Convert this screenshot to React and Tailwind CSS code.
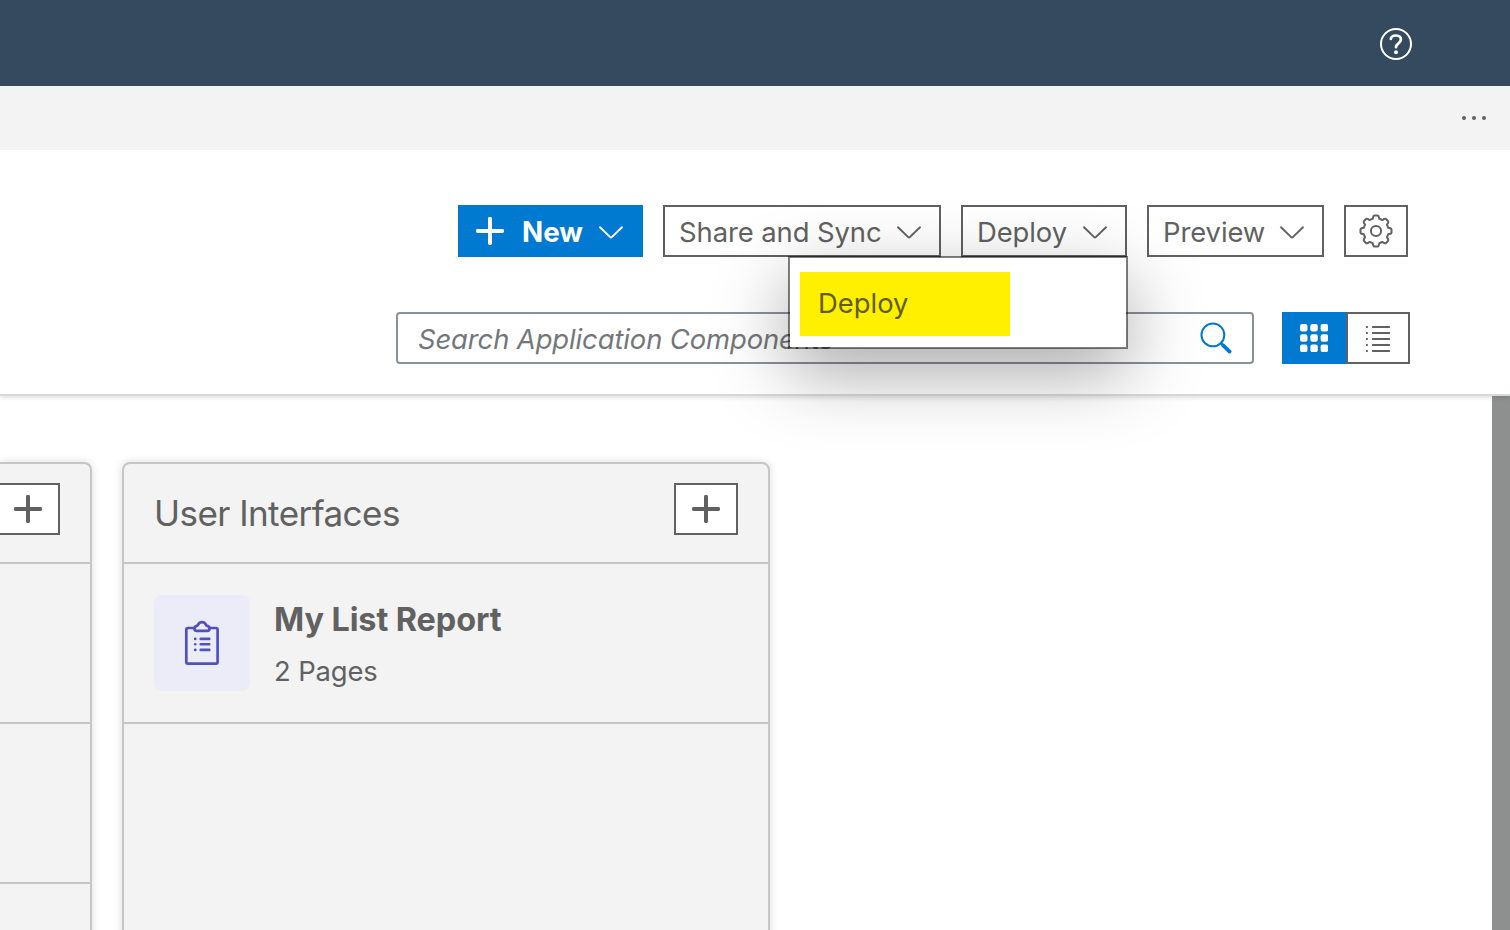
import React from 'react';

function Chevron() {
  return (
    <svg width="26" height="14" viewBox="0 0 26 14" fill="none" stroke="currentColor" strokeWidth="1.9" strokeLinecap="round" strokeLinejoin="round" className="mt-[3px] shrink-0">
      <path d="M2 1.3 L12.2 11.1 Q13 11.9 13.8 11.1 L24 1.3" />
    </svg>
  );
}

function Plus() {
  return (
    <svg width="28" height="28" viewBox="0 0 28 28" fill="currentColor" className="shrink-0">
      <rect x="12" width="4" height="28" rx="1.4" />
      <rect y="12" width="28" height="4" rx="1.4" />
    </svg>
  );
}

function Gear() {
  const steps = [];
  for (let i = 0; i < 8; i++) {
    const a = (i * Math.PI) / 4 - Math.PI / 2;
    // r: distance out from the centre, t: offset across the tooth
    const p = (r, t) => `${(17 + r * Math.cos(a) - t * Math.sin(a)).toFixed(2)} ${(17 + r * Math.sin(a) + t * Math.cos(a)).toFixed(2)}`;
    steps.push(`${i ? 'L' : 'M'}${p(12.2, -3.3)} L${p(14.4, -2.7)} Q${p(15.5, -2.4)} ${p(15.5, -1.4)} L${p(15.5, 1.4)} Q${p(15.5, 2.4)} ${p(14.4, 2.7)} L${p(12.2, 3.3)} Q${p(11.8, 4.6)} ${p(10.96, 6.29)}`);
  }
  return (
    <svg width="34" height="34" viewBox="0 0 34 34" fill="none" stroke="currentColor" strokeWidth="2" strokeLinejoin="round">
      <path d={steps.join(' ') + 'Z'} />
      <circle cx="17" cy="17" r="5.1" />
    </svg>
  );
}

function ToolButton({ children, width }) {
  return (
    <button className={`flex h-[52px] items-center justify-between border-2 border-[#616161] bg-white pt-px pl-[14px] pr-[17px] text-[27.4px] leading-[34px] tracking-[-0.07px] ${width}`}>
      <span className="pt-px">{children}</span>
      <Chevron />
    </button>
  );
}

function AddButton({ className }) {
  return (
    <button className={`flex h-[52px] items-center justify-center border-2 border-[#616161] bg-white ${className}`}>
      <Plus />
    </button>
  );
}

function DeployMenu() {
  return (
    <div className="absolute top-[51px] right-[-1px] z-10 h-[93px] w-[340px] border-2 border-black/50 bg-white bg-clip-padding pt-[14px] pl-[10px] shadow-[0_24px_72px_rgba(0,0,0,0.34)]">
      <div className="flex h-16 w-[210px] items-center bg-[#fff000] pb-0.5 pl-[18px] text-[27.4px] leading-[34px] text-[#625c00]">
        Deploy
      </div>
    </div>
  );
}

function Toolbar() {
  return (
    <section className="relative z-10 flex h-[246px] shrink-0 flex-col items-end gap-[55px] border-b-2 border-[#d9d9d9] bg-white pt-[55px] shadow-[0_3px_4px_-1px_rgba(0,0,0,0.12)]">
      <div className="relative z-10 mr-[102px] flex gap-5">
        <button className="flex h-[52px] w-[185px] items-center bg-[#0079d0] pl-[18px] text-[27.8px] leading-[34px] font-bold text-white">
          <Plus />
          <span className="mr-auto pt-0.5 pl-[18px]">New</span>
          <span className="pr-[19px]"><Chevron /></span>
        </button>
        <ToolButton width="w-[278px]">Share and Sync</ToolButton>
        <div className="relative">
          <ToolButton width="w-[166px]">Deploy</ToolButton>
          <DeployMenu />
        </div>
        <ToolButton width="w-[177px]">Preview</ToolButton>
        <button className="flex h-[52px] w-16 items-center justify-center border-2 border-[#616161] bg-white"><Gear /></button>
      </div>
      <div className="mr-[100px] flex">
        <div className="mr-7 flex h-[52px] w-[858px] items-center justify-between rounded-[4px] border-2 border-[#89919a] bg-white pr-[19px] pl-5 text-[27.4px] text-[#74777a]">
          <span className="pt-0.5 leading-[34px] tracking-[-0.1px] italic">Search Application Components</span>
          <svg width="34" height="34" viewBox="0 0 34 34" fill="none" stroke="#0079d0" strokeLinecap="round">
            <circle cx="13.9" cy="13.9" r="11.4" strokeWidth="2" />
            <path d="M22.2 22.4L24.2 24.4" strokeWidth="2.6" />
            <path d="M24.2 24.4L30.6 30.6" strokeWidth="3.8" />
          </svg>
        </div>
        <button className="flex h-[52px] w-16 items-center justify-center bg-[#0079d0]">
          <svg width="28" height="28" viewBox="0 0 28 28" fill="white">
            {[0, 10.3, 20.6].map((y) => [0, 10.3, 20.6].map((x) => <rect key={x + '-' + y} x={x} y={y} width="7.5" height="7.5" rx="2.1" />))}
          </svg>
        </button>
        <button className="flex h-[52px] w-16 items-center justify-center border-2 border-[#616161] bg-white pt-0.5">
          <svg width="24" height="26" viewBox="0 0 24 26" fill="#616161">
            {[0, 6, 12, 18, 24].map((y) => (
              <g key={y}><rect y={y} width="1.8" height="2" /><rect x="6" y={y} width="18" height="2" rx=".5" /></g>
            ))}
          </svg>
        </button>
      </div>
    </section>
  );
}

export default function App() {
  return (
    <div className="flex h-[930px] w-[1510px] flex-col overflow-hidden bg-white font-['Inter',sans-serif] text-[#616161]">
      <header className="flex h-[86px] shrink-0 items-center justify-end bg-[#354a5f] pt-0.5 pr-[98px]">
        <svg width="32" height="32" viewBox="0 0 32 32" fill="none" stroke="white" strokeLinecap="round">
          <circle cx="16" cy="16" r="15" strokeWidth="2" />
          <path d="M10.8 11 C11.6 6.3 20.9 6.2 20.9 11.6 C20.9 15.6 16 15.2 16 19.2" strokeWidth="2.7" />
          <circle cx="16" cy="24.2" r="2" fill="white" stroke="none" />
        </svg>
      </header>
      <div className="flex h-16 shrink-0 items-center justify-end gap-[6px] bg-[#f3f3f3] pr-6">
        <i className="size-1 rounded-full bg-[#616161]" />
        <i className="size-1 rounded-full bg-[#616161]" />
        <i className="size-1 rounded-full bg-[#616161]" />
      </div>
      <Toolbar />
      <main className="flex min-h-0 flex-1">
        <div className="flex flex-1 gap-[30px] pt-[66px]">
          <div className="h-[600px] w-[92px] rounded-tr-lg border-t-2 border-r-2 border-[#c6c6c6] bg-[#f3f3f3] shadow-[0_0_8px_rgba(0,0,0,0.14)]">
            <div className="h-[100px] border-b-2 border-[#c6c6c6] pt-[19px]"><AddButton className="w-[60px] border-l-0 pr-0.5" /></div>
            <div className="h-40 border-b-2 border-[#c6c6c6]" />
            <div className="h-40 border-b-2 border-[#c6c6c6]" />
          </div>
          <div className="h-[600px] w-[648px] rounded-t-lg border-2 border-[#c6c6c6] bg-[#f3f3f3] shadow-[0_0_8px_rgba(0,0,0,0.14)]">
            <div className="flex h-[100px] items-start justify-between border-b-2 border-[#c6c6c6] pt-[19px] pr-[30px] pl-[30px]">
              <h2 className="pt-[8px] text-[35px] leading-[44px] tracking-[-0.56px]">User Interfaces</h2>
              <AddButton className="w-16" />
            </div>
            <div className="flex h-40 border-b-2 border-[#c6c6c6] pt-[31px] pl-[30px]">
              <div className="flex size-24 items-center justify-center rounded-lg bg-[#ececf9]">
                <svg width="36" height="46" viewBox="0 0 36 46" fill="none" stroke="#5151bd" strokeWidth="2.7" strokeLinecap="round" strokeLinejoin="round">
                  <path d="M10.5 8H4Q2.3 8 2.3 9.7V42Q2.3 43.6 4 43.6H32Q33.6 43.6 33.6 42V9.7Q33.6 8 32 8H25.5" />
                  <path d="M12.8 10.9Q10.4 10.9 10.4 8.6Q10.7 6.2 13.8 5.4Q15 2.2 18 2.2Q21 2.2 22.2 5.4Q25.3 6.2 25.6 8.6Q25.6 10.9 23.2 10.9Z" />
                  <path d="M16.7 18.9H25.3M16.7 24.3H25.3M16.7 29.9H25.3M11.2 18.9H11.3M11.2 24.3H11.3M11.2 29.9H11.3" strokeWidth="2.6" />
                </svg>
              </div>
              <div className="pl-6">
                <h3 className="pt-[5px] text-[32.4px] leading-10 font-bold tracking-[-0.08px]">My List Report</h3>
                <p className="pt-[14px] text-[27.4px] leading-[34px] tracking-[-0.12px]">2 Pages</p>
              </div>
            </div>
          </div>
        </div>
        <div className="w-[18px] bg-[#8e908f]" />
      </main>
    </div>
  );
}
